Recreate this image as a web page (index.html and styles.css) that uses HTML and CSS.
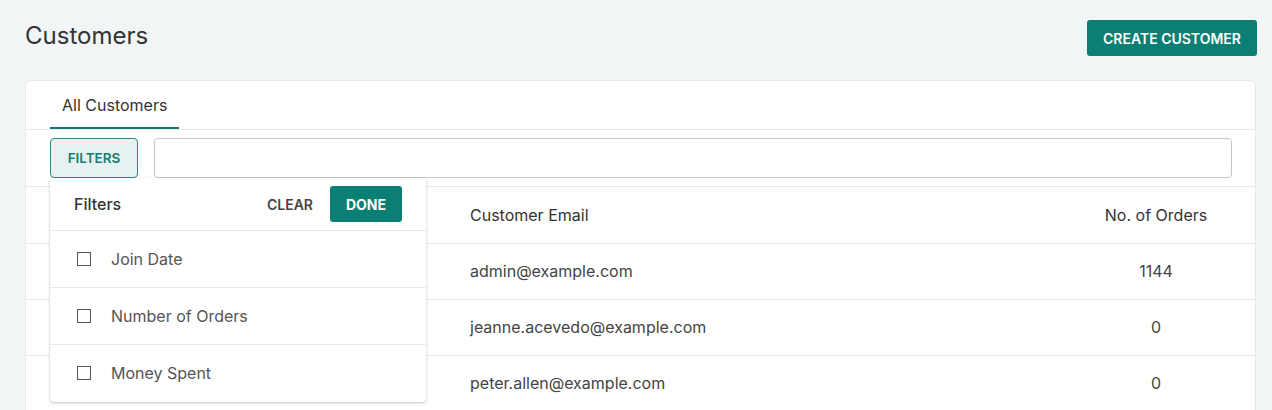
FILE: index.html
```html
<!DOCTYPE html>
<html>
<head>
<meta charset="utf-8">
<link rel="stylesheet" href="styles.css">
</head>
<body>
<div class="page">
  <header class="page-header">
    <h1 class="title">Customers</h1>
    <button class="btn btn-primary create">CREATE CUSTOMER</button>
  </header>
  <section class="card">
    <nav class="tabs">
      <div class="tab active">All Customers</div>
    </nav>
    <div class="filter-bar">
      <button class="btn-filters">FILTERS</button>
      <input class="search" type="text">
    </div>
    <div class="table">
      <div class="row head">
        <div class="cell c1"></div>
        <div class="cell c2">Customer Email</div>
        <div class="cell c3">No. of Orders</div>
      </div>
      <div class="row">
        <div class="cell c1"></div>
        <div class="cell c2">admin@example.com</div>
        <div class="cell c3">1144</div>
      </div>
      <div class="row">
        <div class="cell c1"></div>
        <div class="cell c2">jeanne.acevedo@example.com</div>
        <div class="cell c3">0</div>
      </div>
      <div class="row">
        <div class="cell c1"></div>
        <div class="cell c2">peter.allen@example.com</div>
        <div class="cell c3">0</div>
      </div>
    </div>
    <div class="dropdown">
      <div class="dd-head">
        <span class="dd-title">Filters</span>
        <div class="dd-actions">
          <button class="btn-clear">CLEAR</button>
          <button class="btn btn-primary done">DONE</button>
        </div>
      </div>
      <label class="dd-item"><span class="check"></span><span>Join Date</span></label>
      <label class="dd-item"><span class="check"></span><span>Number of Orders</span></label>
      <label class="dd-item"><span class="check"></span><span>Money Spent</span></label>
    </div>
  </section>
</div>
</body>
</html>
```

FILE: styles.css
```css
* { box-sizing: border-box; }
html, body { margin: 0; padding: 0; }
body {
  background: #f2f5f5;
  font-family: Inter, "Noto Sans", sans-serif;
  color: #333;
  height: 410px;
  overflow: hidden;
}
.page { padding: 20px 15px 0 25px; }
.page-header {
  display: flex;
  justify-content: space-between;
  align-items: center;
  height: 36px;
}
.title {
  margin: 0 0 4px 0;
  font-size: 24px;
  line-height: 28px;
  font-weight: 400;
  color: #333;
}
.btn {
  border: none;
  font-family: inherit;
  cursor: pointer;
}
.btn-primary {
  background: #0b7f73;
  color: #fff;
  font-weight: 700;
  border-radius: 3px;
}
.create {
  width: 170px;
  height: 36px;
  font-size: 14px;
  font-weight: 600;
}
.card {
  position: relative;
  margin-top: 24px;
  margin-right: 1px;
  background: #fff;
  border: 1px solid #e6eaea;
  border-bottom: none;
  border-radius: 6px 6px 0 0;
}
.tabs {
  display: flex;
  padding-left: 24px;
  height: 49px;
  border-bottom: 1px solid #e7eaea;
}
.tab {
  padding: 0 12px;
  font-size: 16px;
  color: #333;
  display: flex;
  align-items: center;
  height: 49px;
}
.tab.active { border-bottom: 2px solid #117a70; height: 48px; padding-top: 2px; }
.filter-bar {
  display: flex;
  gap: 16px;
  padding: 8px 23px 8px 24px;
  border-bottom: 1px solid #e7eaea;
  height: 57px;
}
.btn-filters {
  width: 88px;
  height: 40px;
  background: #e6f2f2;
  border: 1px solid #2a877d;
  border-radius: 4px;
  color: #187c72;
  font-family: inherit;
  font-size: 13.5px;
  font-weight: 600;
}
.search {
  flex: 1;
  height: 40px;
  border: 1px solid #c6c6c6;
  border-radius: 4px;
}
.row {
  display: grid;
  grid-template-columns: 396px 1fr 152px;
  padding: 0 23px 2px 24px;
  height: 56px;
  align-items: center;
  border-bottom: 1px solid #e7eaea;
  font-size: 16px;
  color: #444;
}
.row.head { height: 57px; color: #333; padding-bottom: 0; }
.c2 { padding-left: 24px; }
.c3 { text-align: center; }
.dropdown {
  position: absolute;
  left: 24px;
  top: 97px;
  width: 376px;
  background: #fff;
  border-radius: 0 0 4px 4px;
  box-shadow: 0 1px 3px rgba(0,0,0,0.25);
}
.dd-head {
  display: flex;
  justify-content: space-between;
  align-items: center;
  padding: 8px 24px 8px 24px;
  height: 53px;
  border-bottom: 1px solid #e7eaea;
}
.dd-title { font-size: 16px; font-weight: 500; color: #333; }
.dd-actions { display: flex; align-items: center; gap: 9px; }
.btn-clear {
  background: none;
  border: none;
  font-family: inherit;
  font-size: 14px;
  font-weight: 600;
  color: #444;
  padding: 0 8px;
  height: 36px;
}
.done {
  width: 72px;
  height: 36px;
  font-size: 14px;
}
.dd-item {
  display: flex;
  align-items: center;
  height: 57px;
  padding-left: 27px;
  padding-bottom: 1px;
  border-bottom: 1px solid #e7eaea;
  font-size: 16px;
  color: #555;
}
.dd-item:last-child { border-bottom: none; }
.check {
  width: 14px;
  height: 14px;
  border: 1.5px solid #555;
  margin-right: 20px;
}
```
